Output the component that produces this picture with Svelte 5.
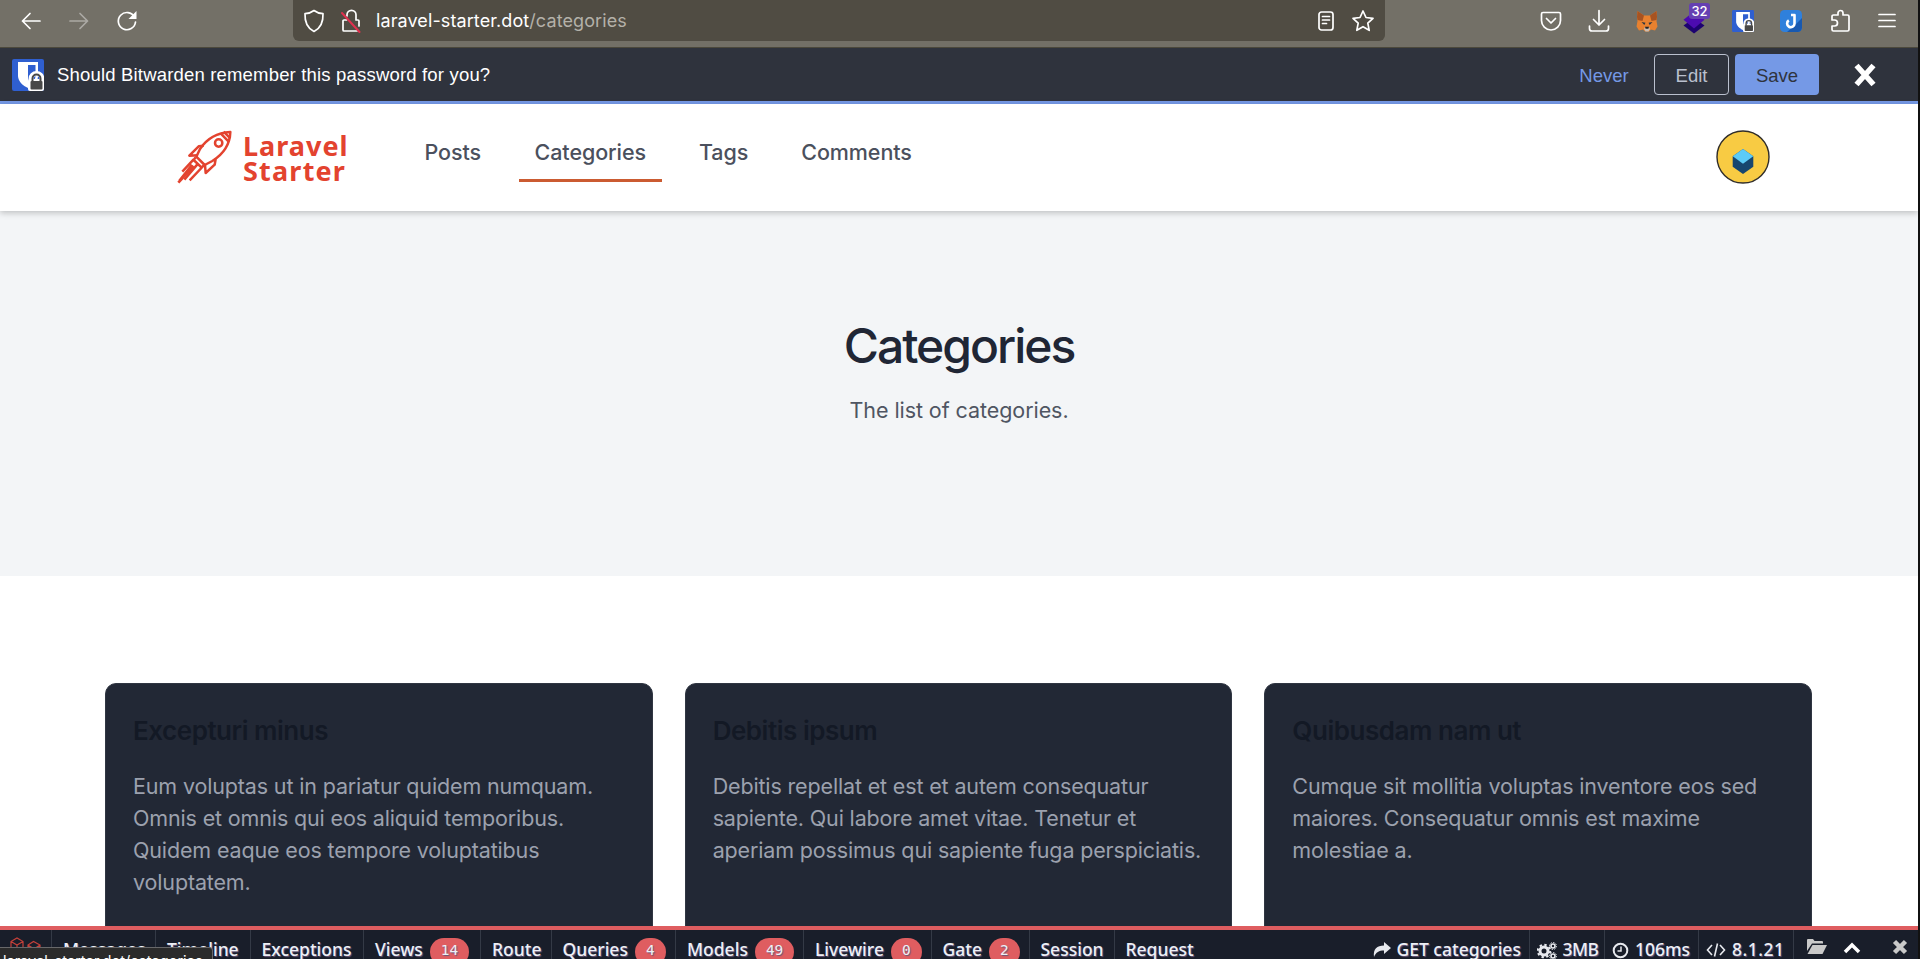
<script>
  const links = ['Posts', 'Categories', 'Tags', 'Comments'];
  const cards = [
    { title: 'Excepturi minus', lines: ['Eum voluptas ut in pariatur quidem numquam.', 'Omnis et omnis qui eos aliquid temporibus.', 'Quidem eaque eos tempore voluptatibus', 'voluptatem.'] },
    { title: 'Debitis ipsum', lines: ['Debitis repellat et est et autem consequatur', 'sapiente. Qui labore amet vitae. Tenetur et', 'aperiam possimus qui sapiente fuga perspiciatis.'] },
    { title: 'Quibusdam nam ut', lines: ['Cumque sit mollitia voluptas inventore eos sed', 'maiores. Consequatur omnis est maxime', 'molestiae a.'] }
  ];
  const tabs = [
    { name: 'Messages' }, { name: 'Timeline' }, { name: 'Exceptions' },
    { name: 'Views', count: 14 }, { name: 'Route' }, { name: 'Queries', count: 4 },
    { name: 'Models', count: 49 }, { name: 'Livewire', count: 0 }, { name: 'Gate', count: 2 },
    { name: 'Session' }, { name: 'Request' }
  ];
</script>

{#snippet bitwarden()}
  <rect width="32" height="32" rx="2" fill="#2f5fd0" />
  <path d="M6 3h20v14c0 6-6 10-10 12C11 27 6 22 6 17z" fill="#fff" />
  <path d="M16 6h7.500v11c0 4-3.500 6.500-7.500 8.500z" fill="#2f5fd0" />
  <path d="M19 22v-2a5.500 5.500 0 0 1 11 0v2" fill="none" stroke="#fff" stroke-width="5" />
  <rect x="16" y="20" width="16" height="12" rx="2" fill="#fff" />
  <path d="M20.500 22v-2.500a4 4 0 0 1 8 0V22" fill="none" stroke="#484848" stroke-width="2" />
  <rect x="18.500" y="22" width="12" height="8.500" rx="1" fill="#484848" />
{/snippet}

<div class="page">
  <header class="toolbar">
    <div class="history">
      <svg width="22" height="22" viewBox="0 0 22 22"><path d="M20 11H2.500M10 3.500 2.500 11l7.500 7.500" /></svg>
      <svg class="off" width="22" height="22" viewBox="0 0 22 22"><path d="M2 11h17.500M12 3.500l7.500 7.500-7.500 7.500" /></svg>
      <svg width="22" height="22" viewBox="0 0 22 22"><path d="M18.500 7A8.600 8.600 0 1 0 19.500 12" /><path d="M20.500 1v8h-8z" fill="#fff" stroke="none" /></svg>
    </div>
    <div class="address">
      <svg width="22" height="24" viewBox="0 0 22 24"><path d="M11 1.500c3 2.300 5.500 3 9 3.200C20.300 12 18 19 11 22.500 4 19 1.700 12 2 4.700c3.500-.2 6-.9 9-3.200z" /></svg>
      <svg class="lock" width="20" height="24" viewBox="0 0 20 24"><path d="M6 7V5.800a4.500 4.500 0 0 1 9 0V11h2a1 1 0 0 1 1 1v5M5.500 11H3a1 1 0 0 0-1 1v9a1 1 0 0 0 1 1h13" /><path d="m1 4 17.500 19" stroke="#e0304e" stroke-width="2" /></svg>
      <span class="url">laravel-starter.dot<i>/categories</i></span>
      <svg width="18" height="20" viewBox="0 0 18 20"><rect x="2" y="1" width="14" height="18" rx="2.500" /><path d="M5.500 5.500h7M5.500 9h7M5.500 12.500h4" /></svg>
      <svg class="star" width="24" height="24" viewBox="0 0 24 24"><path d="m12 2 3 6.500 7 .8-5.200 4.800 1.400 7.200L12 17.700l-6.200 3.600 1.400-7.200L2 9.300l7-.8z" /></svg>
    </div>
    <div class="extensions">
      <svg width="24" height="24" viewBox="0 0 24 24"><path d="M4 3.500h16a1.500 1.500 0 0 1 1.500 1.500v6.500a9.500 9.500 0 0 1-19 0V5A1.500 1.500 0 0 1 4 3.500zM7.500 9.500l4.500 4.500 4.500-4.500" /></svg>
      <svg width="24" height="24" viewBox="0 0 24 24"><path d="M12 1.500V16M6.500 10.500 12 16l5.500-5.500M2.500 17v2.500A2.500 2.500 0 0 0 5 22h14a2.500 2.500 0 0 0 2.500-2.500V17" /></svg>
      <svg width="24" height="24" viewBox="0 0 24 24"><g stroke="none"><path d="M2.500 2 9 6.500h6L21.500 2 22 9l-.5 3 1 5.500-2.500 4-4-1-2 2h-4l-2-2-4 1-2.500-4 1-5.500L2 9z" fill="#e8812f" /><path d="M2.500 2 9 6.500 7.500 12 2.500 11 2 8zM21.500 2 15 6.500l1.500 5.500 5-1 .5-3z" fill="#a65322" /><path d="m6.500 13 4 .8-1.200 2.200zm11 0-4 .8 1.200 2.200z" fill="#2b3540" /><path d="m9 20 1-2h4l1 2-1.500 2.500h-3z" fill="#c9bcb2" /><path d="M10 17.800h4l-.6 2h-2.800z" fill="#222" /></g></svg>
      <div class="stack">
        <svg width="24" height="24" viewBox="0 0 24 24"><path d="m12 8 10.500 7.500L12 23.500 1.500 15.500z" fill="#1d0270" stroke="none" /><path d="m12 1.500 10.500 8.300L12 18.500 1.500 9.800z" fill="#4c0bb0" stroke="none" /></svg>
        <b>32</b>
      </div>
      <svg width="22" height="22" viewBox="0 0 32 32"><g stroke="none">{@render bitwarden()}</g></svg>
      <svg width="22" height="22" viewBox="0 0 22 22"><rect width="22" height="22" rx="4.500" fill="#2f80dc" stroke="none" /><path d="M22 8v9.500a4.500 4.500 0 0 1-4.500 4.500H7l8-7z" fill="#1859b0" stroke="none" /><path d="M11 5h3.500V13.500a3.700 3.700 0 1 1-5.700-3.100" stroke-width="2.600" stroke-linecap="butt" /></svg>
      <svg width="24" height="24" viewBox="0 0 24 24"><path d="M4 11V7.500A1.500 1.500 0 0 1 5.500 6H10V4a2.500 2.500 0 0 1 5 0v2h4.500A1.500 1.500 0 0 1 21 7.500v13a1.500 1.500 0 0 1-1.500 1.500h-14A1.500 1.500 0 0 1 4 20.500V17h2.500a3 3 0 0 0 0-6z" /></svg>
      <svg width="20" height="20" viewBox="0 0 20 20"><path d="M2 3.500h16M2 9.500h16M2 15.500h16" /></svg>
    </div>
  </header>

  <section class="notice">
    <svg width="32" height="32" viewBox="0 0 32 32">{@render bitwarden()}</svg>
    <p>Should Bitwarden remember this password for you?</p>
    <button class="never">Never</button>
    <button class="edit">Edit</button>
    <button class="save">Save</button>
    <svg class="dismiss" width="24" height="24" viewBox="0 0 24 24"><path d="m3.500 2.500 17 19M20.500 2.500l-17 19" stroke="#fff" stroke-width="5.500" /></svg>
  </section>

  <nav class="site">
    <a class="brand" href="#home">
      <svg width="55" height="55" viewBox="0 0 165 165" fill="none" stroke="#e3432f" stroke-width="7.500" stroke-linejoin="round">
        <path d="M160 6C122 8 89 27 69 57L58 80l25 25 23-12c30-19 53-49 54-87z" />
        <circle cx="125" cy="39" r="11" />
        <path d="m131 10 24 25M140 5l20 20" />
        <path d="M80 47 65 49 37 77l25-1M116 87l-3 17-27 25-2-24" />
        <path d="m56 82-6 8 24 23 7-8M45 104 7 152M50 88 16 125M63 101 22 149M76 111l-38 40" />
        <path d="M4 158 50 108" stroke-width="8" />
      </svg>
      <span>Laravel<br /><em>Starter</em></span>
    </a>
    <div class="links">
      {#each links as link}
        <a href="#{link}" class:active={link === 'Categories'}>{link}</a>
      {/each}
    </div>
    <svg class="avatar" width="54" height="54" viewBox="0 0 54 54">
      <circle cx="27" cy="27" r="26" fill="#f8cb43" stroke="#302d29" stroke-width="1.400" />
      <path d="m27 19 10.300 7.300v10.400L27 44l-10.300-7.300V26.300z" fill="#17466f" />
      <path d="m27 19 10.300 7.300L27 33.700l-10.300-7.400z" fill="#5ccbf7" />
    </svg>
  </nav>

  <section class="hero">
    <h1>Categories</h1>
    <p>The list of categories.</p>
  </section>

  <main>
    {#each cards as card}
      <article>
        <h2>{card.title}</h2>
        <p>{#each card.lines as line}<span>{line}</span>{/each}</p>
      </article>
    {/each}
  </main>

  <footer>
    <div class="tabs">
      <div class="mark">
        <svg width="32" height="24" viewBox="0 0 32 24" fill="none" stroke="#c5413a" stroke-width="1.200"><path d="M2 4.500 8 1l6 3.500v13L8 21l-6-3.500zM2 4.500 8 8l6-3.500M8 8v13M19 8l5.500-3.500L31 8v9l-6 4-6-4zM19 8l6 4 6-4M25 12v9" /></svg>
      </div>
      {#each tabs as tab}
        <div class="tab">{tab.name}{#if tab.count !== undefined}<b>{tab.count}</b>{/if}</div>
      {/each}
    </div>
    <div class="stats">
      <div>
        <svg width="18" height="17" viewBox="0 0 18 17"><path d="M11 0v3.500C4 3.500 0 7 1 15c2-5 5-6.500 10-6.500V12l7-6z" /></svg>
        <span>GET categories</span>
      </div>
      <div>
        <svg width="20" height="18" viewBox="0 0 20 18" fill="none" stroke="#e7e9ee"><circle cx="7" cy="9" r="4" stroke-width="3" /><circle cx="7" cy="9" r="6.200" stroke-width="2" stroke-dasharray="2.400 2.400" /><circle cx="16" cy="4" r="2" stroke-width="1.600" /><circle cx="16" cy="4" r="3.500" stroke-width="1" stroke-dasharray="1.400 1.300" /><circle cx="16" cy="14" r="2" stroke-width="1.600" /><circle cx="16" cy="14" r="3.500" stroke-width="1" stroke-dasharray="1.400 1.300" /></svg>
        <span class="tight">3MB</span>
      </div>
      <div>
        <svg width="17" height="17" viewBox="0 0 17 17" fill="none" stroke="#e7e9ee" stroke-width="2"><circle cx="8.500" cy="8.500" r="6.800" /><path d="M9 4.500V9H5.500" stroke-width="1.500" /></svg>
        <span>106ms</span>
      </div>
      <div>
        <svg width="20" height="16" viewBox="0 0 20 16" fill="none" stroke="#e7e9ee" stroke-width="1.600"><path d="M6 3 1.500 8 6 13M14 3l4.500 5-4.500 5M11.500 1.500l-3 13" /></svg>
        <span class="wide">8.1.21</span>
      </div>
      <div class="controls">
        <svg width="22" height="17" viewBox="0 0 22 17" fill="#c9c9c9"><path d="M1 13V2q0-1 1-1h5l1.500 2H16q1 0 1 1v1.500H6z" /><path d="M6.500 7H21l-4.500 9H1.500z" /></svg>
        <svg width="18" height="14" viewBox="0 0 18 14" fill="none"><path d="m2 11 7-7 7 7" stroke="#fff" stroke-width="3.500" /></svg>
        <svg width="16" height="16" viewBox="0 0 16 16" fill="none"><path d="m2.500 2.500 11 11M13.500 2.500l-11 11" stroke="#c9c9c9" stroke-width="4.500" /></svg>
      </div>
    </div>
  </footer>
  <div class="status">laravel-starter.dot/categories</div>
</div>

<style>
  :global(body) { margin: 0; overflow: hidden; }
  .page { position: relative; box-sizing: border-box; width: 1920px; height: 959px; overflow: hidden; display: flex; flex-direction: column; background: #fff; border-right: 2px solid #111; font-family: Inter, sans-serif; }
  svg { display: block; flex: none; }
  h1, h2, p { margin: 0; }
  a { color: inherit; text-decoration: none; }
  button { box-sizing: border-box; height: 41px; padding: 2px 0 0; border: 0; border-radius: 4px; background: none; font: 18.500px "Liberation Sans", sans-serif; }

  .toolbar { flex: none; box-sizing: border-box; height: 48px; display: flex; background: #737067; border-bottom: 1px solid #4c493c; }
  .toolbar svg { fill: none; stroke: #fff; stroke-width: 1.700; stroke-linecap: round; stroke-linejoin: round; }
  .history { box-sizing: border-box; width: 293px; height: 42px; padding-left: 20px; display: flex; align-items: center; gap: 26px; }
  .history .off { opacity: .4; }
  .address { box-sizing: border-box; width: 1092px; height: 41px; padding: 0 10px; display: flex; align-items: center; background: #504c43; border-radius: 0 0 6px 6px; }
  .lock { margin-left: 16px; }
  .url { flex: 1; margin-left: 15px; font-size: 18px; line-height: 41px; letter-spacing: .1px; color: #fff; }
  .url i { font-style: normal; color: #b4b1a9; }
  .star { margin-left: 16px; }
  .extensions { height: 41px; margin-left: 154px; display: grid; grid-template-columns: 47.500px 48px 47.500px 49.500px 48px 48px 49.500px 20px; align-items: center; }
  .stack { position: relative; padding-top: 3px; }
  .stack b { position: absolute; left: 7px; top: -4px; width: 21px; height: 16px; border-radius: 3px; background: #6540b2; color: #fff; font-size: 13px; font-weight: 500; line-height: 16px; text-align: center; }

  .notice { flex: none; box-sizing: border-box; height: 56px; padding: 0 41px 0 12px; display: flex; align-items: center; background: #2f333d; border-bottom: 3px solid #7599e6; font-family: "Liberation Sans", sans-serif; }
  .notice p { flex: 1; margin-left: 13px; font-size: 18.500px; letter-spacing: .18px; color: #fff; }
  .never { width: 50px; margin-right: 25px; color: #7599e6; }
  .edit { width: 75px; margin-right: 6px; border: 1.500px solid #bac0ce; color: #bac0ce; }
  .save { width: 84px; background: #7599e6; color: #2f333d; }
  .dismiss { margin-left: 34px; }

  .site { position: relative; z-index: 1; flex: none; box-sizing: border-box; height: 107px; padding: 0 148px 1px 177px; display: flex; align-items: center; background: #fff; box-shadow: 0 2px 6px rgba(0, 0, 0, .22); }
  .brand { display: flex; width: 231px; color: #e3432f; font: 700 27px/25px "Noto Sans", sans-serif; letter-spacing: 1px; gap: 11px; align-items: center; }
  .brand em { font-style: normal; letter-spacing: 1.200px; }
  .brand span { padding-top: 1px; }
  .links { flex: 1; display: flex; gap: 21px; }
  .links a { box-sizing: border-box; height: 50px; padding: 0 16px; border-bottom: 3px solid transparent; color: #4b505d; font-size: 21.500px; font-weight: 500; line-height: 41px; letter-spacing: -.08px; }
  .links a:first-child { padding-left: 16.500px; padding-right: 16.500px; }
  .links .active { border-color: #cb5b31; }

  .hero { flex: none; height: 365px; background: #f3f5f7; text-align: center; }
  .hero h1 { padding-top: 105px; font-size: 48px; font-weight: 500; line-height: 60px; letter-spacing: -2px; color: #202635; }
  .hero p { margin-top: 17px; font-size: 21.500px; line-height: 34px; letter-spacing: -.07px; color: #4f5562; }

  main { box-sizing: border-box; flex: 1; min-height: 0; padding: 107px 106px 0 105px; display: grid; grid-template-columns: repeat(3, minmax(0, 1fr)); gap: 32px; }
  article { box-sizing: border-box; height: 300px; padding: 29px 27px; background: #222835; border: 1px solid #303642; border-radius: 11px; }
  h2 { font-size: 26px; line-height: 36px; font-weight: 600; letter-spacing: -.470px; color: #131925; }
  article p { margin-top: 21px; color: #9ca1ae; font-size: 21.500px; line-height: 32px; letter-spacing: -.150px; }
  article span { display: block; white-space: nowrap; }

  footer { position: absolute; left: 0; right: 0; bottom: 0; height: 29px; display: flex; justify-content: space-between; border-top: 4px solid #df5d60; background: #191e2a; color: #edf0f6; font: 500 17.500px "Noto Sans", sans-serif; overflow: hidden; text-shadow: 1px 1px 1px #657; }
  .tabs { height: 38px; display: grid; grid-template-columns: 52px 104px 94.500px 113.500px 117px 70.500px 124.500px 128px 127.500px 98px 85px 110px; line-height: 39px; }
  .mark, .tab { box-sizing: border-box; border-right: 1px solid #343a46; white-space: nowrap; }
  .mark { padding: 7px 0 0 9px; }
  .tab { padding-left: 11px; display: flex; }
  .tab:last-child { border: 0; }
  .tab b { box-sizing: border-box; height: 28px; min-width: 30px; margin: 8px 0 0 7px; padding: 0 11px; border-radius: 14px; background: #df5d60; font: 14.500px/24px "DejaVu Sans Mono", monospace; text-align: center; }
  .stats { height: 40px; display: grid; grid-template-columns: 169px 75.500px 94px 95px 124px; line-height: 39px; }
  .stats > div { display: flex; gap: 6px; padding-left: 7px; box-sizing: border-box; border-right: 1px solid #343a46; white-space: nowrap; }
  .stats > div:first-child { padding-left: 12px; }
  .stats svg { margin-top: 12px; }
  .stats svg:not([fill]) { fill: #e7e9ee; }
  .stats .tight { letter-spacing: -.500px; }
  .stats .wide { letter-spacing: .500px; }
  .stats .controls { padding-left: 12px; gap: 15px; border: 0; }
  .controls svg { margin-top: 8px; }
  .controls svg:nth-child(2) { margin-top: 11px; }
  .controls svg:last-child { margin-left: 16px; margin-top: 9px; }
  .status { position: absolute; left: 0; top: 947px; box-sizing: border-box; width: 213px; height: 24px; padding-left: 3px; background: #2b2b2b; border: solid #68686a; border-width: 1px 1px 0 0; border-radius: 0 4px 0 0; color: #fff; font-size: 14.500px; line-height: 26px; white-space: nowrap; }
</style>
